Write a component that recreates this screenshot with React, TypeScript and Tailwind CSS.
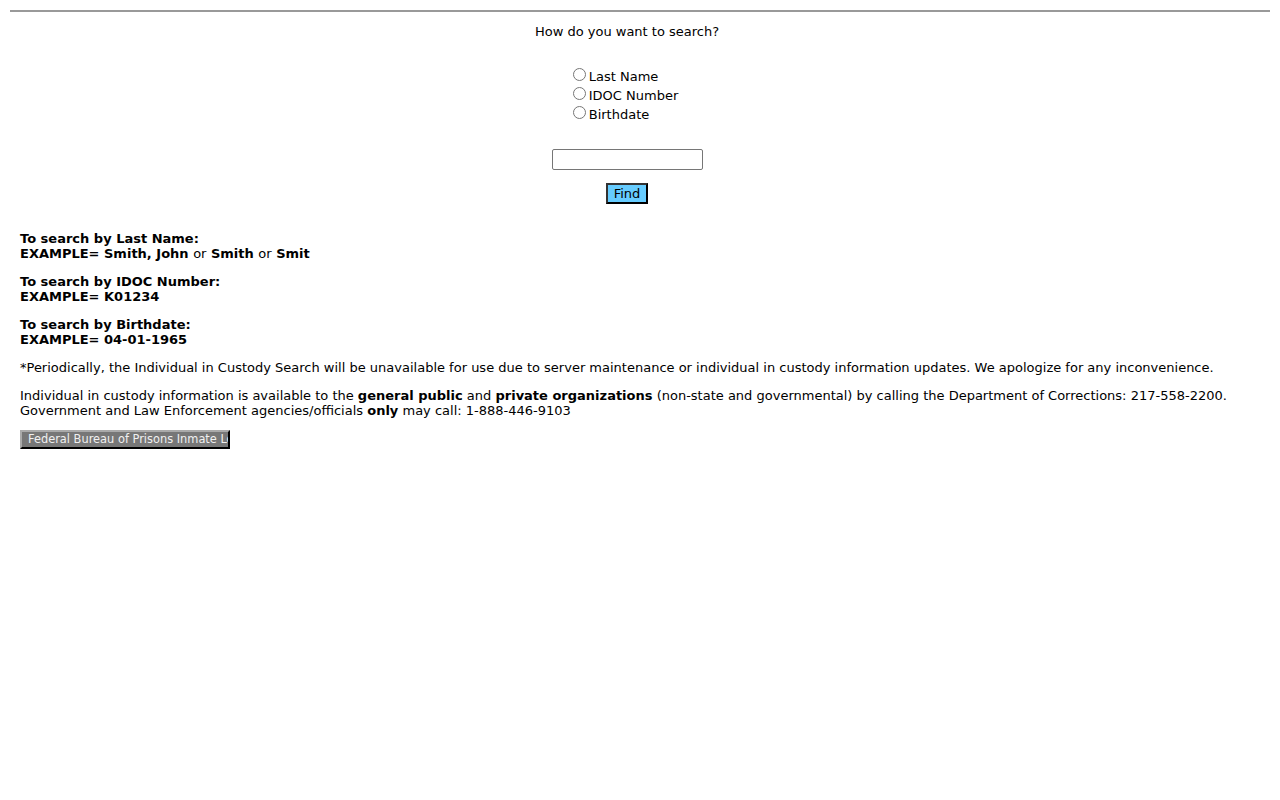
import React from "react";

export default function App() {
  return (
    <div className="p-[10px] font-['DejaVu_Sans',sans-serif] text-[13px] leading-[15px] text-black bg-white min-h-[800px]">
      <div className="border-t-2 border-[#999999]" />
      <div className="w-[1234px] text-center">
        <div className="mt-[12px]">How do you want to search?</div>
        <div className="mt-[28px] inline-block text-left pr-[8px]">
          <label className="flex items-center h-[19px]">
            <input type="radio" name="t" className="w-[13px] h-[13px] mr-[3px] ml-[5px] mt-[-5px]" />
            <span>Last Name</span>
          </label>
          <label className="flex items-center h-[19px]">
            <input type="radio" name="t" className="w-[13px] h-[13px] mr-[3px] ml-[5px] mt-[-5px]" />
            <span>IDOC Number</span>
          </label>
          <label className="flex items-center h-[19px]">
            <input type="radio" name="t" className="w-[13px] h-[13px] mr-[3px] ml-[5px] mt-[-5px]" />
            <span>Birthdate</span>
          </label>
        </div>
        <div className="mt-[25px] flex justify-center">
          <input
            type="text"
            className="w-[151px] h-[21px] border border-[#767676] rounded-[2px] bg-white"
          />
        </div>
        <div className="mt-[13px] flex justify-center">
          <button className="w-[42px] h-[21px] bg-[#66ccff] border-2 border-black border-t-[#333] border-l-[#333] text-[13px] leading-[15px] font-['DejaVu_Sans',sans-serif]">
            Find
          </button>
        </div>
      </div>
      <div className="px-[10px] mt-[27px]">
        <p className="font-bold">
          To search by Last Name:
          <br />
          EXAMPLE= Smith, John <span className="font-normal">or</span> Smith{" "}
          <span className="font-normal">or</span> Smit
        </p>
        <p className="font-bold mt-[13px]">
          To search by IDOC Number:
          <br />
          EXAMPLE= K01234
        </p>
        <p className="font-bold mt-[13px]">
          To search by Birthdate:
          <br />
          EXAMPLE= 04-01-1965
        </p>
        <p className="mt-[13px]">
          *Periodically, the Individual in Custody Search will be unavailable for use due to server maintenance or individual in custody information updates. We apologize for any inconvenience.
        </p>
        <p className="mt-[13px]">
          Individual in custody information is available to the <b>general public</b> and{" "}
          <b>private organizations</b> (non-state and governmental) by calling the Department of Corrections: 217-558-2200.
          <br />
          Government and Law Enforcement agencies/officials <b>only</b> may call: 1-888-446-9103
        </p>
        <div className="mt-[12px]">
          <button className="w-[210px] h-[19px] overflow-hidden whitespace-nowrap text-left pl-[6px] bg-[#777777] text-[#f0f0f0] text-[11.4px] leading-[15px] border-2 border-t-[#aaa] border-l-[#aaa] border-b-black border-r-black font-['DejaVu_Sans',sans-serif]">
            Federal Bureau of Prisons Inmate Locator
          </button>
        </div>
      </div>
    </div>
  );
}
